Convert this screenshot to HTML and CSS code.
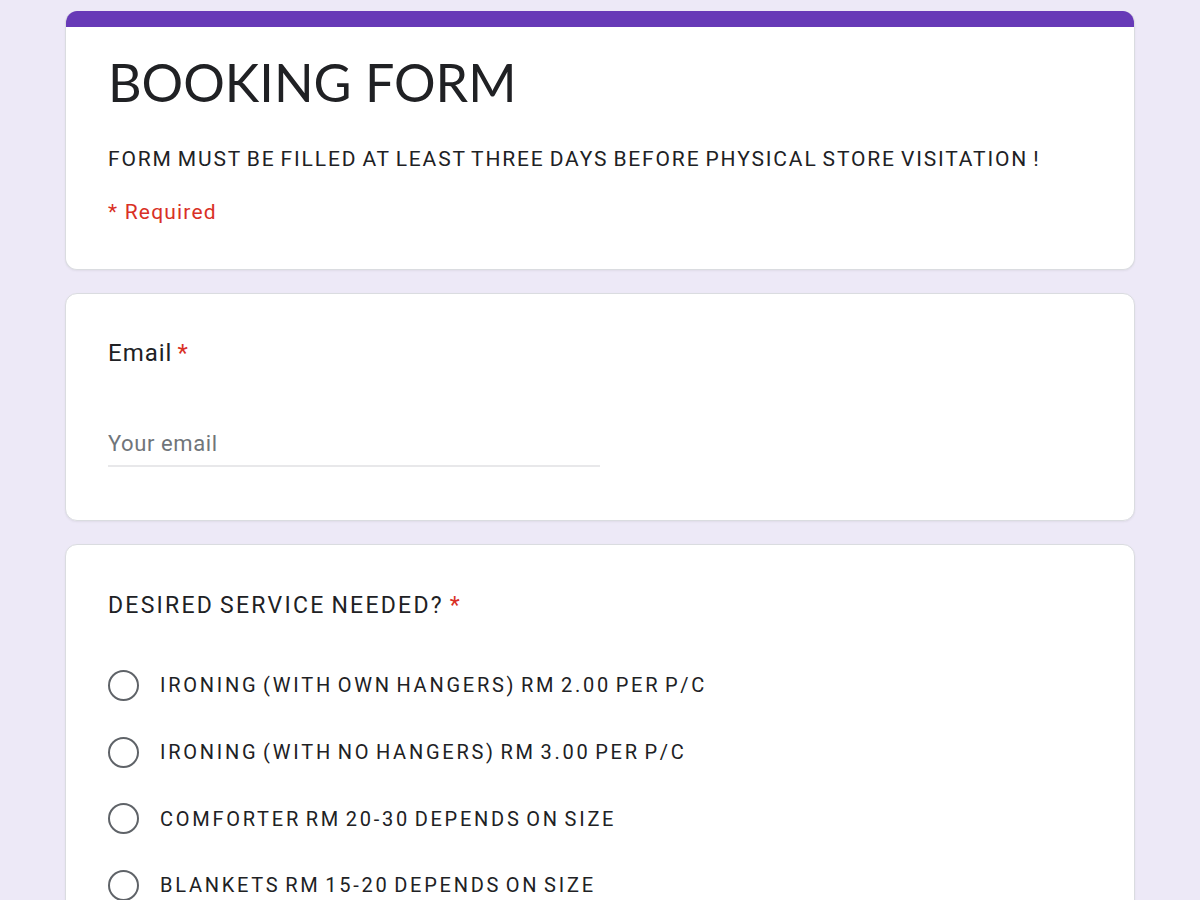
FILE: index.html
```html
<!DOCTYPE html>
<html lang="en">
<head>
    <meta charset="UTF-8">
    <title>BOOKING FORM</title>
    <link rel="stylesheet" href="styles.css">
</head>
<body>
    <form class="form" action="#" method="POST">
        <div class="card header-card">
            <div class="header-bar"></div>
            <div class="header-body">
                <h1 class="form-title">BOOKING FORM</h1>
                <p class="form-desc">FORM MUST BE FILLED AT LEAST THREE DAYS BEFORE PHYSICAL STORE VISITATION !</p>
                <p class="required-note">* Required</p>
            </div>
        </div>

        <div class="card question">
            <label class="q-title email-title" for="email">Email <span class="star">*</span></label>
            <input class="text-input" type="email" id="email" name="email" placeholder="Your email">
        </div>

        <div class="card question choice-question">
            <div class="q-title">DESIRED SERVICE NEEDED? <span class="star">*</span></div>
            <div class="options">
                <label class="option"><input type="radio" name="service"><span class="radio"></span>IRONING (WITH OWN HANGERS) RM 2.00 PER P/C</label>
                <label class="option"><input type="radio" name="service"><span class="radio"></span>IRONING (WITH NO HANGERS) RM 3.00 PER P/C</label>
                <label class="option"><input type="radio" name="service"><span class="radio"></span>COMFORTER RM 20-30 DEPENDS ON SIZE</label>
                <label class="option"><input type="radio" name="service"><span class="radio"></span>BLANKETS RM 15-20 DEPENDS ON SIZE</label>
                <label class="option"><input type="radio" name="service"><span class="radio"></span>CURTAINS RM 10 PER PIECE</label>
            </div>
        </div>
    </form>
</body>
</html>
```

FILE: styles.css
```css
body {
    margin: 0;
    background: #ede9f7;
    font-family: Roboto, "Liberation Sans", Arial, sans-serif;
    color: #202124;
}
.form {
    width: 1070px;
    margin: 11px auto 0;
    display: flex;
    flex-direction: column;
    gap: 23px;
}
.card {
    background: white;
    border: 1px solid #dadce0;
    border-radius: 12px;
    box-shadow: 0 1px 2px rgba(60, 64, 67, 0.08);
    overflow: hidden;
}
.header-card {
    border-top: none;
}
.header-bar {
    height: 16px;
    background: #673ab7;
}
.header-body {
    padding: 23px 42px 43px;
}
.form-title {
    margin: 0;
    font-family: Lato, "Open Sans", sans-serif;
    font-weight: 400;
    font-size: 52px;
    line-height: 64px;
    color: #202124;
}
.form-desc {
    margin: 31px 0 0;
    font-size: 21px;
    line-height: 28px;
    letter-spacing: 1.85px;
    word-spacing: -2px;
}
.required-note {
    margin: 25px 0 0;
    font-size: 21px;
    line-height: 28px;
    letter-spacing: 1.2px;
    color: #d93025;
}
.question {
    padding: 41px 42px 53px;
}
.choice-question {
    padding-top: 43px;
}
.q-title {
    display: block;
    font-size: 23px;
    line-height: 36px;
    letter-spacing: 2.25px;
    word-spacing: -2px;
}
.email-title {
    font-size: 24px;
    letter-spacing: 1px;
}
.star {
    color: #d93025;
}
.text-input {
    display: block;
    width: 492px;
    margin-top: 52px;
    padding: 6px 0 6px;
    border: none;
    border-bottom: 2px solid #e8e8ea;
    font-family: Roboto, "Liberation Sans", Arial, sans-serif;
    font-size: 22px;
    line-height: 30px;
    letter-spacing: 0.6px;
    color: #202124;
    outline: none;
}
.text-input::placeholder {
    color: #70757a;
}
.options {
    margin-top: 28px;
    display: flex;
    flex-direction: column;
}
.option {
    height: 66.7px;
    display: flex;
    align-items: center;
    gap: 21px;
    font-size: 20px;
    letter-spacing: 2.75px;
    word-spacing: -3px;
    cursor: pointer;
}
.option input {
    display: none;
}
.radio {
    width: 27px;
    height: 27px;
    border: 2.5px solid #5f6368;
    border-radius: 50%;
    flex-shrink: 0;
}
```
